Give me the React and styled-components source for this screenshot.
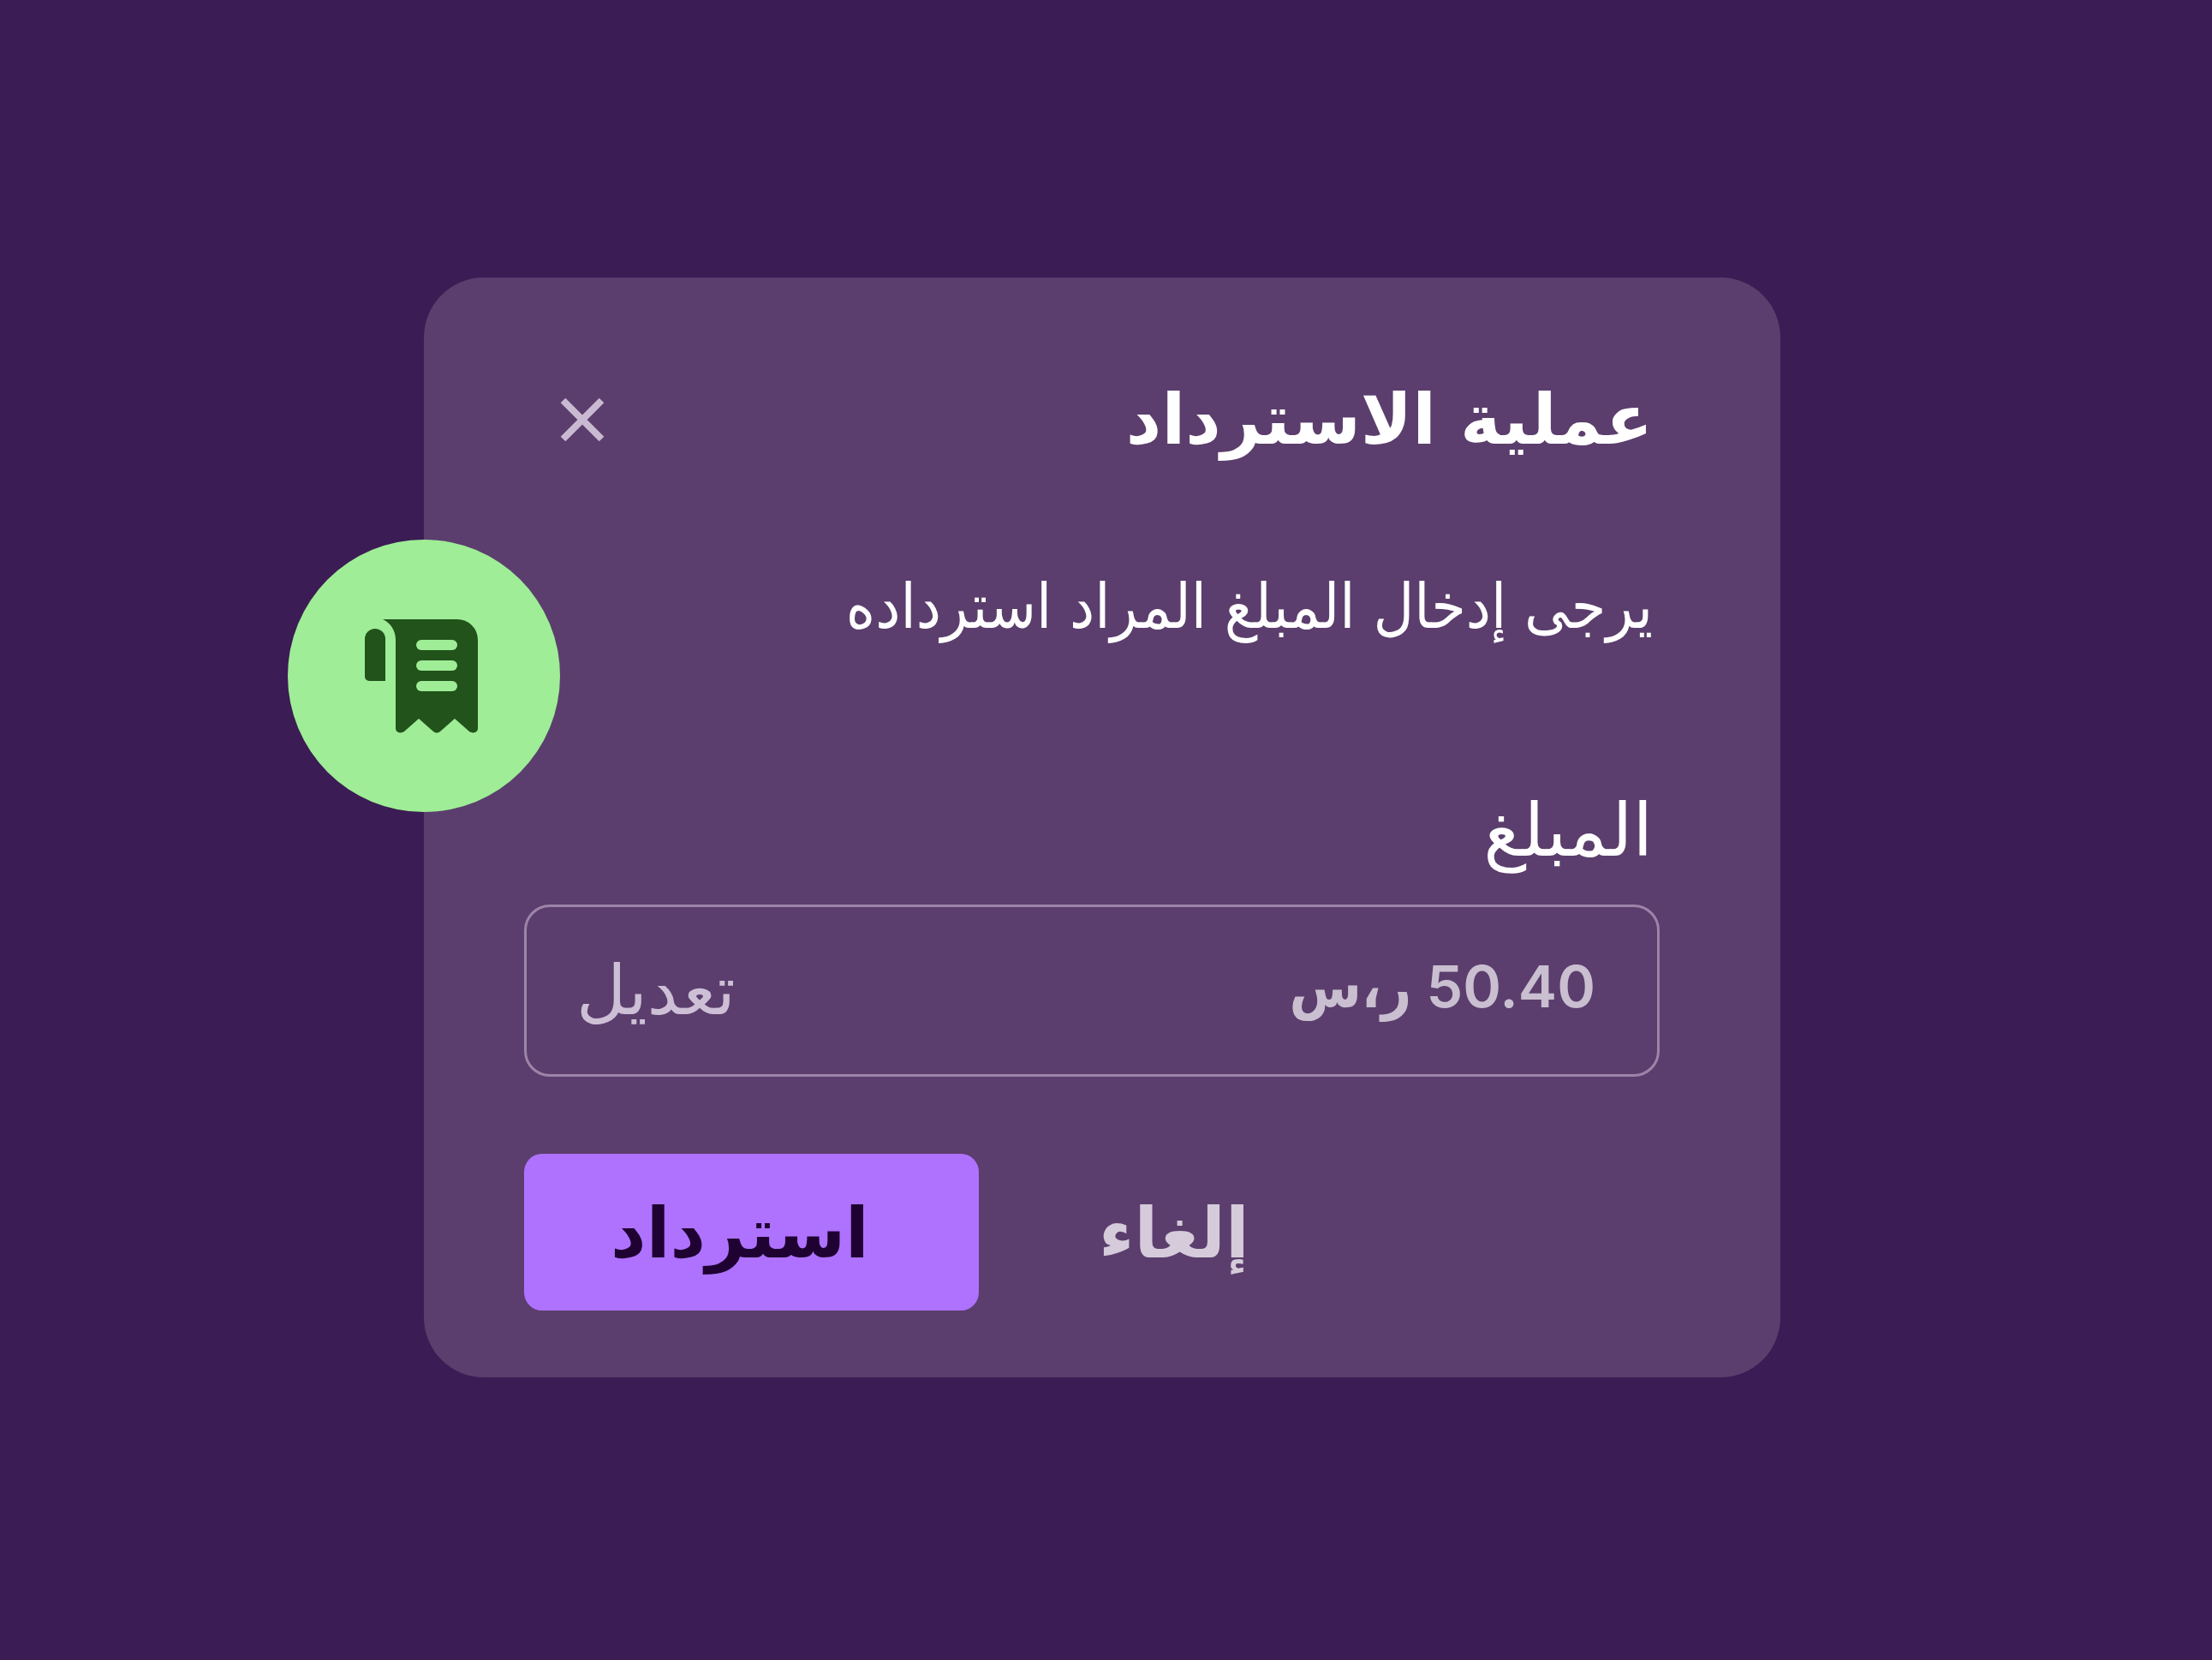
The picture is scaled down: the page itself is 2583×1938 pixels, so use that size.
import styled, { createGlobalStyle } from "styled-components";

const GlobalStyle = createGlobalStyle`
  * {
    box-sizing: border-box;
  }

  body {
    margin: 0;
    background: #3b1c54;
    font-family: "DejaVu Sans", sans-serif;
  }
`;

const App = () => {
  return (
    <Page dir="rtl" lang="ar">
      <GlobalStyle />
      <Dialog role="dialog" aria-labelledby="refund-title">
        <Badge>
          <ReceiptIcon />
        </Badge>
        <Header>
          <Title id="refund-title">عملية الاسترداد</Title>
          <CloseButton type="button" aria-label="إغلاق">
            <svg width="52" height="52" viewBox="0 0 52 52" aria-hidden="true">
              <path
                d="M3.5 3.5l45 45M48.5 3.5l-45 45"
                stroke="currentColor"
                strokeWidth="8"
              />
            </svg>
          </CloseButton>
        </Header>
        <Description>يرجى إدخال المبلغ المراد استرداده</Description>
        <Label htmlFor="amount">المبلغ</Label>
        <Field>
          <AmountInput id="amount" type="text" defaultValue="50.40 ر،س" />
          <EditButton type="button">تعديل</EditButton>
        </Field>
        <Actions>
          <CancelButton type="button">إلغاء</CancelButton>
          <SubmitButton type="submit">استرداد</SubmitButton>
        </Actions>
      </Dialog>
    </Page>
  );
};

const ReceiptIcon = () => (
  <svg width="144" height="144" viewBox="0 0 144 144" aria-hidden="true">
    <g fill="#21531b">
      <path d="M3 29a12 12 0 0 1 24 0v49H8a5 5 0 0 1-5-5z" />
      <path d="M24 6h87a24 24 0 0 1 24 24v103c0 5-5 7-10 4l-17-15-17 15q-4 3-8 0l-17-15-17 15c-5 3-10 1-10-4V30c0-11-6-20-15-24z" />
    </g>
    <g fill="#9fed97">
      <rect x="63" y="30" width="48" height="12" rx="6" />
      <rect x="63" y="54" width="48" height="12" rx="6" />
      <rect x="63" y="78" width="48" height="12" rx="6" />
    </g>
  </svg>
);

export default App;

const Page = styled.main`
  display: flex;
  align-items: center;
  justify-content: center;
  min-height: 100vh;
  padding: 0 9px 6px 0;
`;

const Dialog = styled.form`
  position: relative;
  width: 100%;
  max-width: 1584px;
  padding: 106px 141px 78px 117px;
  border-radius: 70px;
  background: #5b3e6d;
  color: #ffffff;
`;

const Badge = styled.div`
  position: absolute;
  top: 306px;
  left: -159px;
  display: flex;
  align-items: center;
  justify-content: center;
  width: 318px;
  height: 318px;
  border-radius: 50%;
  background: #9fed97;
`;

const Header = styled.header`
  display: flex;
  align-items: center;
  justify-content: space-between;
  padding: 0 8px 0 24px;
`;

const Title = styled.h1`
  margin: 0;
  font-size: 81px;
  font-weight: 700;
  line-height: 120px;
`;

const CloseButton = styled.button`
  display: flex;
  padding: 18px;
  border: none;
  background: transparent;
  color: #c9bad2;
  cursor: pointer;
`;

const Description = styled.p`
  margin: 98px 0 0;
  padding: 0 8px;
  font-family: "DejaVu Sans Condensed", "DejaVu Sans", sans-serif;
  font-size: 73px;
  line-height: 120px;
`;

const Label = styled.label`
  display: block;
  margin-top: 142px;
  padding: 0 8px;
  font-size: 85px;
  line-height: 120px;
`;

const Field = styled.div`
  display: flex;
  align-items: center;
  justify-content: space-between;
  height: 201px;
  margin-top: 26px;
  padding: 0 72px 0 58px;
  border: 3px solid #9c85a8;
  border-radius: 30px;
`;

const AmountInput = styled.input`
  flex: 1;
  min-width: 0;
  padding: 0 0 12px;
  border: none;
  outline: none;
  background: transparent;
  color: #c9bfd0;
  font-family: Inter, "DejaVu Sans Condensed", "DejaVu Sans", sans-serif;
  font-size: 68px;
  font-weight: 600;
  line-height: 120px;
`;

const EditButton = styled.button`
  padding: 0;
  border: none;
  background: transparent;
  color: #cdbfd6;
  font-family: inherit;
  font-size: 80px;
  line-height: 120px;
  cursor: pointer;
`;

const Actions = styled.div`
  display: flex;
  justify-content: flex-end;
  gap: 68px;
  margin-top: 90px;
`;

const ActionButton = styled.button`
  height: 183px;
  border: none;
  border-radius: 21px;
  font-family: inherit;
  font-size: 81px;
  font-weight: 700;
  line-height: 120px;
  cursor: pointer;
`;

const CancelButton = styled(ActionButton)`
  padding: 2px 72px 0;
  background: transparent;
  color: #d5cbda;
`;

const SubmitButton = styled(ActionButton)`
  width: 531px;
  padding: 2px 27px 0 0;
  background: #ae72ff;
  color: #1f0231;
`;
